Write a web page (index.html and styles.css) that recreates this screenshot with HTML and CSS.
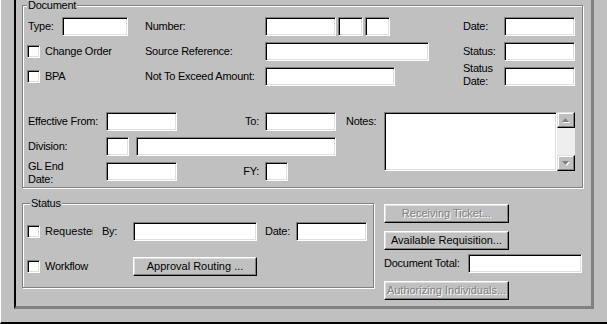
FILE: index.html
```html
<!DOCTYPE html>
<html lang="en">
<head>
    <meta charset="UTF-8">
    <title>Document</title>
    <link rel="stylesheet" href="styles.css">
</head>
<body>
<div class="window">
    <div class="panel">

        <!-- Document group -->
        <div class="group doc-group">
            <span class="caption">Document</span>

            <div class="doc-top">
                <div class="cell">
                    <span class="type-lbl">Type:</span>
                    <input class="field w66" type="text">
                </div>
                <span>Number:</span>
                <div class="cell gap2">
                    <input class="field w71" type="text">
                    <input class="field w25" type="text">
                    <input class="field w25" type="text">
                </div>
                <span>Date:</span>
                <input class="field w71" type="text">

                <div class="cell">
                    <input class="check" type="checkbox">
                    <span class="check-lbl">Change Order</span>
                </div>
                <span>Source Reference:</span>
                <input class="field w164" type="text">
                <span>Status:</span>
                <input class="field w71" type="text">

                <div class="cell">
                    <input class="check" type="checkbox">
                    <span class="check-lbl">BPA</span>
                </div>
                <span>Not To Exceed Amount:</span>
                <input class="field w130" type="text">
                <span class="two-line up">Status<br>Date:</span>
                <input class="field w71" type="text">
            </div>

            <div class="doc-bottom">
                <span class="first">Effective From:</span>
                <div class="cell between">
                    <input class="field w71" type="text">
                    <span>To:</span>
                </div>
                <input class="field w71" type="text">
                <span>Notes:</span>
                <div class="notes">
                    <textarea class="field notes-text"></textarea>
                    <div class="sb">
                        <div class="sb-btn">
                            <svg width="8" height="5" viewBox="0 0 8 5"><polygon points="4,1 8,5 1,5" fill="#fff"/><polygon points="3.5,0 7,4 0,4" fill="#808080"/></svg>
                        </div>
                        <div class="sb-track"></div>
                        <div class="sb-btn">
                            <svg width="8" height="5" viewBox="0 0 8 5"><polygon points="1,1 8,1 4.5,5" fill="#fff"/><polygon points="0,0 7,0 3.5,4" fill="#808080"/></svg>
                        </div>
                    </div>
                </div>

                <span class="first">Division:</span>
                <div class="cell span2 gap7">
                    <input class="field w23" type="text">
                    <input class="field w200" type="text">
                </div>

                <span class="first two-line down">GL End<br>Date:</span>
                <div class="cell between">
                    <input class="field w71" type="text">
                    <span>FY:</span>
                </div>
                <input class="field w23" type="text">
            </div>
        </div>

        <div class="lower">
            <!-- Status group -->
            <div class="group status-group">
                <span class="caption status-cap">Status</span>
                <div class="status-row">
                    <input class="check" type="checkbox">
                    <span class="check-lbl req-lbl">Requester</span>
                    <span class="by-lbl first-by">By:</span>
                    <input class="field w124" type="text">
                    <span class="by-lbl">Date:</span>
                    <input class="field w71" type="text">
                </div>
                <div class="status-row second">
                    <input class="check" type="checkbox">
                    <span class="check-lbl wf-lbl">Workflow</span>
                    <button class="btn w124">Approval Routing ...</button>
                </div>
            </div>

            <div class="side">
                <button class="btn w125" disabled>Receiving Ticket...</button>
                <button class="btn w125">Available Requisition...</button>
                <div class="total">
                    <span class="total-lbl">Document Total:</span>
                    <input class="field w114" type="text">
                </div>
                <button class="btn w125" disabled>Authorizing Individuals...</button>
            </div>
        </div>

    </div>
</div>
</body>
</html>
```

FILE: styles.css
```css
body {
    margin: 0;
    background-color: #c0c0c0;
    font-family: "Liberation Sans", Arial, sans-serif;
    font-size: 11px;
    line-height: 13px;
    letter-spacing: -0.25px;
    color: #000;
}
.window {
    height: 324px;
    box-sizing: border-box;
    border-left: 1px solid #fff;
    border-bottom: 2px solid #000;
    padding-left: 13px;
    overflow: hidden;
}
.panel {
    width: 580px;
    height: 309px;
    box-sizing: border-box;
    border-left: 2px solid #000;
    border-right: 3px solid #808080;
    border-bottom: 3px solid #808080;
    padding: 5px 0 0 6px;
}

/* etched group box */
.group {
    position: relative;
    box-sizing: border-box;
    border: 1px solid #808080;
    box-shadow: 1px 1px 0 #fff, inset 1px 1px 0 #fff;
}
.caption {
    position: absolute;
    top: -7px;
    left: 4px;
    padding: 0 1px;
    background-color: #c0c0c0;
}
.doc-group {
    width: 561px;
    height: 183px;
}

/* controls */
.field {
    box-sizing: border-box;
    height: 19px;
    margin: 0;
    padding: 0 2px;
    border: 1px solid;
    border-color: #808080 #fff #fff #808080;
    box-shadow: inset 1px 1px 0 #000, inset -1px -1px 0 #dfdfdf;
    background-color: #fff;
    font: inherit;
    outline: none;
}
.check {
    appearance: none;
    box-sizing: border-box;
    width: 13px;
    height: 13px;
    margin: 0;
    flex: none;
    border: 1px solid;
    border-color: #808080 #fff #fff #808080;
    box-shadow: inset 1px 1px 0 #000, inset -1px -1px 0 #dfdfdf;
    background-color: #fff;
}
.check-lbl {
    margin-left: 5px;
    white-space: nowrap;
}
.btn {
    box-sizing: border-box;
    height: 19px;
    padding: 0;
    border: 1px solid;
    border-color: #fff #000 #000 #fff;
    box-shadow: inset -1px -1px 0 #808080, inset 1px 1px 0 #dfdfdf;
    background-color: #c0c0c0;
    font: inherit;
    color: #000;
}
.btn:disabled {
    color: #808080;
    text-shadow: 1px 1px 0 #fff;
}
.w23 { width: 23px; }
.w25 { width: 25px; }
.w66 { width: 66px; }
.w71 { width: 71px; }
.w114 { width: 114px; }
.w124 { width: 124px; }
.w125 { width: 125px; }
.w130 { width: 130px; }
.w164 { width: 164px; }
.w200 { width: 200px; }

.cell {
    display: flex;
    align-items: center;
}
.gap2 { gap: 2px; }
.gap7 { gap: 7px; }
.between {
    justify-content: space-between;
    padding-right: 6px;
}
.type-lbl {
    width: 34px;
    padding-left: 1px;
}
.two-line {
    white-space: nowrap;
}
.up { margin-top: -4px; }
.down { margin-top: 2px; }

/* document group grids */
.doc-top {
    display: grid;
    grid-template-columns: 118px 120px 198px 41px 71px;
    grid-auto-rows: 19px;
    row-gap: 6px;
    align-items: center;
    margin: 11px 0 0 4px;
}
.doc-bottom {
    display: grid;
    grid-template-columns: 79px 159px 81px 38px 191px;
    grid-template-rows: 19px 19px 19px;
    row-gap: 6px;
    align-items: center;
    margin: 26px 0 0 4px;
}
.doc-bottom .first {
    grid-column: 1;
    padding-left: 1px;
}
.span2 { grid-column: span 2; }
.notes {
    grid-column: 5;
    grid-row: 1 / 4;
    align-self: start;
    display: flex;
    height: 59px;
}
.notes-text {
    width: 173px;
    height: 59px;
    resize: none;
    overflow: hidden;
}
.sb {
    width: 18px;
    display: flex;
    flex-direction: column;
}
.sb-btn {
    box-sizing: border-box;
    height: 16px;
    display: flex;
    align-items: center;
    justify-content: center;
    border: 1px solid;
    border-color: #dfdfdf #000 #000 #dfdfdf;
    box-shadow: inset -1px -1px 0 #808080, inset 1px 1px 0 #fff;
    background-color: #c0c0c0;
}
.sb-track {
    flex: 1;
    background-color: #eeeeee;
}

/* lower part */
.lower {
    display: flex;
    margin-top: 15px;
}
.status-group {
    width: 352px;
    height: 85px;
    padding: 18px 0 0 4px;
}
.status-cap { left: 7px; }
.status-row {
    display: flex;
    align-items: center;
    height: 19px;
}
.status-row.second { margin-top: 16px; }
.req-lbl {
    width: 48px;
    overflow: hidden;
    letter-spacing: 0;
}
.by-lbl {
    width: 31px;
    margin-left: 8px;
}
.first-by { margin-left: 9px; }
.wf-lbl { width: 88px; }
.side {
    margin: 1px 0 0 10px;
    display: flex;
    flex-direction: column;
    align-items: flex-start;
}
.side .btn + .btn { margin-top: 8px; }
.total {
    display: flex;
    align-items: center;
    margin: 4px 0 8px;
}
.total-lbl { width: 84px; }
```
